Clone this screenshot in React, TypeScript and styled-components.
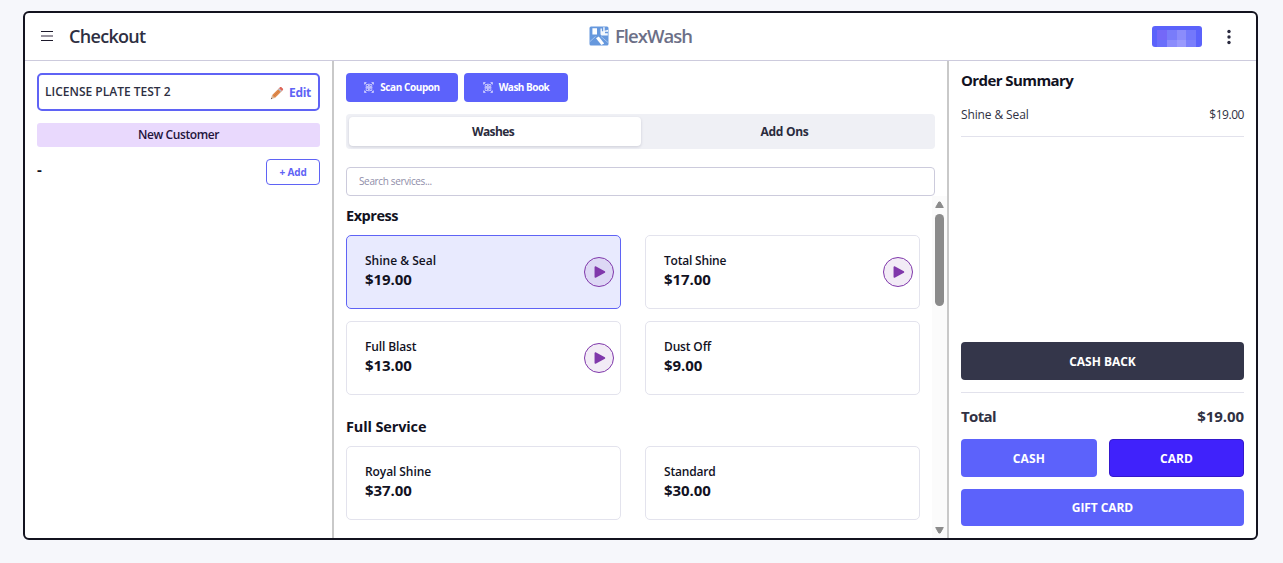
import React from "react";
import styled, { createGlobalStyle } from "styled-components";

const GlobalStyle = createGlobalStyle`
  * { box-sizing: border-box; }
  body {
    margin: 0;
    background: #f6f7fb;
    font-family: "Open Sans", "Noto Sans", sans-serif;
    font-size: 12px;
    color: #12121f;
    overflow: hidden;
  }
  button { font-family: inherit; cursor: pointer; }
`;

const Text = styled.span<{ $size?: number; $weight?: number; $ls?: number; $color?: string }>`
  font-size: ${(p) => p.$size ?? 12}px;
  font-weight: ${(p) => p.$weight ?? 600};
  letter-spacing: ${(p) => p.$ls ?? 0}px;
  color: ${(p) => p.$color ?? "inherit"};
  line-height: 1.3;
  white-space: nowrap;
`;

const Page = styled.div`
  height: 563px;
  padding: 11px 25px 23px 23px;
`;

const Frame = styled.div`
  height: 529px;
  display: flex;
  flex-direction: column;
  border: 2px solid #13131f;
  border-radius: 6px;
  background: #fff;
  overflow: hidden;
`;

const Header = styled.header`
  flex: none;
  height: 48px;
  display: grid;
  grid-template-columns: 1fr auto 1fr;
  align-items: center;
  border-bottom: 1px solid #cdcbdd;
`;

const HeaderLeft = styled.div`
  display: flex;
  align-items: center;
  gap: 14px;
  padding-left: 15px;
`;

const Brand = styled.div`
  display: flex;
  align-items: center;
  gap: 6px;
`;

const HeaderRight = styled.div`
  display: flex;
  align-items: center;
  justify-content: flex-end;
  gap: 24px;
  padding-right: 24px;
`;

const UserChip = styled.div`
  width: 50px;
  height: 21px;
  padding: 4px 6px 0 5px;
  border-radius: 3px;
  background: #5b62fb;
  overflow: hidden;
`;

const Mosaic = styled.div`
  display: grid;
  grid-template-columns: repeat(4, 1fr);
  grid-template-rows: 10px 7px;
`;

const Tile = styled.div<{ $c: string }>`
  background: ${(p) => p.$c};
`;

const Body = styled.div`
  flex: 1;
  min-height: 0;
  display: grid;
  grid-template-columns: 307px 617px 307px;
`;

const CustomerPanel = styled.aside`
  display: flex;
  flex-direction: column;
  gap: 12px;
  padding: 12px;
`;

const PlateBox = styled.div`
  height: 38px;
  display: flex;
  align-items: center;
  justify-content: space-between;
  padding: 0 7px 0 6px;
  border: 2px solid #5f63f5;
  border-radius: 5px;
`;

const EditLink = styled.div`
  display: flex;
  align-items: center;
  gap: 5px;
  padding-top: 1px;
`;

const Badge = styled.div`
  height: 24px;
  display: flex;
  align-items: center;
  justify-content: center;
  border-radius: 3px;
  background: #e9d9fd;
  color: #23143c;
`;

const AddRow = styled.div`
  display: flex;
  align-items: center;
  justify-content: space-between;
`;

const CustomerName = styled.div`
  display: flex;
  padding-bottom: 4px;
`;

const AddButton = styled.button`
  width: 54px;
  height: 26px;
  padding: 0;
  display: flex;
  align-items: center;
  justify-content: center;
  border: 1px solid #5f63f5;
  border-radius: 4px;
  background: #fff;
`;

const Services = styled.main`
  min-height: 0;
  display: flex;
  flex-direction: column;
  border-left: 2px solid #c9c9c9;
  border-right: 2px solid #c9c9c9;
`;

const Toolbar = styled.div`
  display: flex;
  gap: 6px;
  padding: 12px 12px 0;
`;

const ToolButton = styled.button<{ $w: number }>`
  width: ${(p) => p.$w}px;
  height: 29px;
  padding: 0;
  display: flex;
  align-items: center;
  justify-content: center;
  gap: 6px;
  border: 0;
  border-radius: 4px;
  background: #5c62fb;
  color: #fff;
`;

const Tabs = styled.div`
  height: 35px;
  display: grid;
  grid-template-columns: 292px 1fr;
  margin: 12px 12px 0;
  padding: 3px;
  border-radius: 4px;
  background: #eff0f5;
  color: #2a2b3d;
`;

const Tab = styled.div<{ $active?: boolean }>`
  display: flex;
  align-items: center;
  justify-content: center;
  padding-right: 4px;
  border-radius: 4px;
  background: ${(p) => (p.$active ? "#fff" : "transparent")};
  box-shadow: ${(p) => (p.$active ? "0 1px 3px rgba(30, 30, 60, 0.16)" : "none")};
`;

const Search = styled.div`
  flex: none;
  height: 29px;
  display: flex;
  align-items: center;
  margin: 18px 12px 0;
  padding: 0 12px;
  border: 1px solid #cccbdc;
  border-radius: 4px;
`;

const ScrollArea = styled.div`
  flex: 1;
  min-height: 0;
  display: grid;
  grid-template-columns: 1fr 15px;
`;

const Catalog = styled.div`
  padding: 10px 12px 0;
  overflow: hidden;
`;

const Section = styled.section`
  margin-bottom: 22px;
`;

const SectionTitle = styled.h2`
  height: 20px;
  margin: 0 0 9px;
  display: flex;
  align-items: center;
`;

const Cards = styled.div`
  display: grid;
  grid-template-columns: 275px 275px;
  gap: 12px 24px;
`;

const Card = styled.div<{ $selected?: boolean }>`
  height: 74px;
  display: flex;
  align-items: center;
  justify-content: space-between;
  padding: 0 6px 0 18px;
  border: 1px solid ${(p) => (p.$selected ? "#5f63f5" : "#e3e3ed")};
  border-radius: 5px;
  background: ${(p) => (p.$selected ? "#e8eafe" : "#fff")};
`;

const CardText = styled.div`
  display: flex;
  flex-direction: column;
  gap: 1px;
  padding-bottom: 1px;
`;

const Play = styled.button`
  width: 30px;
  height: 30px;
  padding: 0;
  display: grid;
  place-items: center;
  border: 1px solid #8038ab;
  border-radius: 50%;
  background: rgba(128, 56, 171, 0.1);
`;

const ScrollBar = styled.div`
  display: flex;
  flex-direction: column;
  align-items: center;
  padding: 5px 0 4px;
  background: #fbfbfb;
`;

const Thumb = styled.div`
  width: 9px;
  height: 92px;
  margin: 6px 0 auto;
  border-radius: 5px;
  background: #8b8b8b;
`;

const Summary = styled.aside`
  display: flex;
  flex-direction: column;
  padding: 10px 12px 12px;
`;

const SummaryTitle = styled.h2`
  margin: 0;
  height: 20px;
  display: flex;
  align-items: center;
`;

const Line = styled.div<{ $top: number; $h: number }>`
  height: ${(p) => p.$h}px;
  margin-top: ${(p) => p.$top}px;
  display: flex;
  align-items: center;
  justify-content: space-between;
  color: #303143;
`;

const Rule = styled.div<{ $top: number }>`
  height: 1px;
  margin-top: ${(p) => p.$top}px;
  background: #e2e2ec;
`;

const PayGrid = styled.div`
  display: grid;
  grid-template-columns: 136px 135px;
  grid-template-rows: 38px 37px;
  gap: 12px;
  margin-top: 12px;
`;

const PayButton = styled.button<{ $tone?: "dark" | "active"; $wide?: boolean }>`
  min-height: 37px;
  padding: ${(p) => (p.$wide ? "0" : "2px 0 0")};
  display: flex;
  align-items: center;
  justify-content: center;
  grid-column: ${(p) => (p.$wide ? "1 / -1" : "auto")};
  border: ${(p) => (p.$tone === "active" ? "1px solid #3418cd" : "0")};
  border-radius: 4px;
  color: #fff;
  background: ${(p) =>
    p.$tone === "dark" ? "#34364a" : p.$tone === "active" ? "#4022fb" : "#5c62fb"};
`;

const CashBack = styled(PayButton)`
  height: 38px;
  margin-top: auto;
`;

const MenuIcon = () => (
  <svg width="15" height="12" viewBox="0 0 15 12" fill="none">
    <path d="M1 1.5h12M1 10.5h12" stroke="#1d1a2b" />
    <path d="M1 6h12" stroke="#77717f" strokeWidth="1.6" />
  </svg>
);

const LogoIcon = () => (
  <svg width="20" height="20" viewBox="0 0 20 20">
    <rect x="0.5" y="0.5" width="19" height="19" rx="1.5" fill="#6698dd" />
    <path d="M3.4 2.200h4.600v6.400H3.400z" fill="#fff" />
    <path d="M11.500 2.500h1.400v2.700h1.300V1.200h1.500v3.600l3.300-1v2h-3v1.400h2.800v2.400h-5.200c-1.500 0-2.100-.8-2.100-2.200z" fill="#f4f8fd" />
    <path d="M7 12.200l2.800-1.600 5.400 6.800-2.800 1.600z" fill="#fff" />
    <path d="M1 15.500l5.500-5M12 10.500l7 6" stroke="#a9c7ee" strokeWidth="0.9" />
  </svg>
);

const DotsIcon = () => (
  <svg width="6" height="16" viewBox="0 0 6 16" fill="#2b2b40">
    <circle cx="3" cy="2.5" r="1.7" />
    <circle cx="3" cy="8" r="1.7" />
    <circle cx="3" cy="13.5" r="1.7" />
  </svg>
);

const PencilIcon = () => (
  <svg width="14" height="14" viewBox="0 0 14 14">
    <path d="M2 9.200L8.800 2.400l2.900 2.900L4.900 12z" fill="#e08a4c" />
    <path d="M3.400 10.600l6.800-6.800" stroke="#d27c42" strokeWidth="1" />
    <path d="M2 9.200L.9 13.100 4.900 12z" fill="#d9b596" />
    <path d="M1.300 11.700l-.5 1.500 1.600-.4z" fill="#5a4a48" />
    <path d="M8 3.200l1-1 2.900 2.900-1 1z" fill="#b9bfd0" />
    <path d="M9 2.200l.9-.9c.5-.5 1.100-.5 1.600 0l1.300 1.300c.5.5.5 1.100 0 1.600l-.9.9z" fill="#de6659" />
  </svg>
);

const ScanIcon = () => (
  <svg width="10" height="11" viewBox="0 0 10 11" fill="none" stroke="#c9cbfe" strokeWidth="0.9">
    <path d="M.5 2.500v-2h2M7.500.5h2v2M.5 8.500v2h2M7.500 10.500h2v-2" />
    <path d="M2.200 2.500h2.300v2H2.200zM5.800 2.500h2v2h-2zM2.200 6.200h2.300v2.300H2.200zM5.800 6.200h2v2.300h-2zM.8.8l1.700 1.700M9.200.8L7.500 2.500M.8 10.200l1.700-1.700M9.200 10.200L7.500 8.500M5 1.500v8M1.500 5.400h7" />
  </svg>
);

const PlayIcon = () => (
  <svg width="14" height="14" viewBox="0 0 14 14" fill="#8038ab" stroke="#8038ab" strokeLinejoin="round" strokeWidth="1.5">
    <path d="M3.300 2v10L12.500 7z" />
  </svg>
);

const Arrow = ({ down }: { down?: boolean }) => (
  <svg width="9" height="7" viewBox="0 0 9 7" fill="#8b8b8b" stroke="#8b8b8b" strokeLinejoin="round">
    <path d={down ? "M.7.5h7.600L5.200 6H3.800z" : "M.7 6.500h7.600L5.200 1H3.800z"} />
  </svg>
);

type Wash = { name: string; ls: number; price: string; play?: boolean; selected?: boolean };

const sections: { title: string; ls: number; items: Wash[] }[] = [
  {
    title: "Express",
    ls: -0.45,
    items: [
      { name: "Shine & Seal", ls: 0, price: "$19.00", play: true, selected: true },
      { name: "Total Shine", ls: -0.2, price: "$17.00", play: true },
      { name: "Full Blast", ls: -0.13, price: "$13.00", play: true },
      { name: "Dust Off", ls: -0.15, price: "$9.00" },
    ],
  },
  {
    title: "Full Service",
    ls: -0.13,
    items: [
      { name: "Royal Shine", ls: -0.08, price: "$37.00" },
      { name: "Standard", ls: -0.17, price: "$30.00" },
    ],
  },
];

const tiles = ["#7468f8", "#797cfa", "#8b8cfb", "#7378fb", "#6a6ffb", "#8b8cfc", "#9a9afd", "#7b7ffb"];

export default function App() {
  return (
    <Page>
      <GlobalStyle />
      <Frame>
        <Header>
          <HeaderLeft>
            <MenuIcon />
            <Text $size={18} $weight={600} $ls={-0.68} $color="#2e2f42">Checkout</Text>
          </HeaderLeft>
          <Brand>
            <LogoIcon />
            <Text $size={18.5} $weight={600} $ls={-0.95} $color="#6c6f87">FlexWash</Text>
          </Brand>
          <HeaderRight>
            <UserChip>
              <Mosaic>{tiles.map((c, i) => <Tile key={i} $c={c} />)}</Mosaic>
            </UserChip>
            <DotsIcon />
          </HeaderRight>
        </Header>
        <Body>
          <CustomerPanel>
            <PlateBox>
              <Text $color="#2e2f42">LICENSE PLATE TEST 2</Text>
              <EditLink>
                <PencilIcon />
                <Text $weight={700} $ls={-0.3} $color="#5f63f5">Edit</Text>
              </EditLink>
            </PlateBox>
            <Badge><Text $ls={-0.4}>New Customer</Text></Badge>
            <AddRow>
              <CustomerName><Text $size={15} $weight={700}>-</Text></CustomerName>
              <AddButton><Text $size={10} $weight={700} $ls={-0.15} $color="#5f63f5">+ Add</Text></AddButton>
            </AddRow>
          </CustomerPanel>
          <Services>
            <Toolbar>
              <ToolButton $w={112}><ScanIcon /><Text $size={10} $weight={700} $ls={-0.42}>Scan Coupon</Text></ToolButton>
              <ToolButton $w={104}><ScanIcon /><Text $size={10} $weight={700} $ls={-0.5}>Wash Book</Text></ToolButton>
            </Toolbar>
            <Tabs>
              <Tab $active><Text $weight={700} $ls={-0.6}>Washes</Text></Tab>
              <Tab><Text $weight={700} $ls={-0.3}>Add Ons</Text></Tab>
            </Tabs>
            <Search><Text $size={10} $weight={400} $ls={-0.36} $color="#8f8da9">Search services...</Text></Search>
            <ScrollArea>
              <Catalog>
                {sections.map((s) => (
                  <Section key={s.title}>
                    <SectionTitle><Text $size={14.5} $weight={700} $ls={s.ls}>{s.title}</Text></SectionTitle>
                    <Cards>
                      {s.items.map((w) => (
                        <Card key={w.name} $selected={w.selected}>
                          <CardText>
                            <Text $ls={w.ls}>{w.name}</Text>
                            <Text $size={15} $weight={700} $ls={-0.08}>{w.price}</Text>
                          </CardText>
                          {w.play && <Play><PlayIcon /></Play>}
                        </Card>
                      ))}
                    </Cards>
                  </Section>
                ))}
              </Catalog>
              <ScrollBar>
                <Arrow />
                <Thumb />
                <Arrow down />
              </ScrollBar>
            </ScrollArea>
          </Services>
          <Summary>
            <SummaryTitle><Text $size={15} $weight={700} $ls={-0.58}>Order Summary</Text></SummaryTitle>
            <Line $top={14} $h={20}>
              <Text $weight={400} $ls={-0.12}>Shine &amp; Seal</Text>
              <Text $weight={400} $ls={-0.45}>$19.00</Text>
            </Line>
            <Rule $top={11} />
            <CashBack $tone="dark"><Text $weight={700} $ls={-0.03}>CASH BACK</Text></CashBack>
            <Rule $top={12} />
            <Line $top={14} $h={20}>
              <Text $size={15} $weight={700} $ls={-0.65}>Total</Text>
              <Text $size={15} $weight={700} $ls={-0.05}>$19.00</Text>
            </Line>
            <PayGrid>
              <PayButton><Text $weight={700} $ls={0.15}>CASH</Text></PayButton>
              <PayButton $tone="active"><Text $weight={700} $ls={0.05}>CARD</Text></PayButton>
              <PayButton $wide><Text $weight={700} $ls={-0.08}>GIFT CARD</Text></PayButton>
            </PayGrid>
          </Summary>
        </Body>
      </Frame>
    </Page>
  );
}
